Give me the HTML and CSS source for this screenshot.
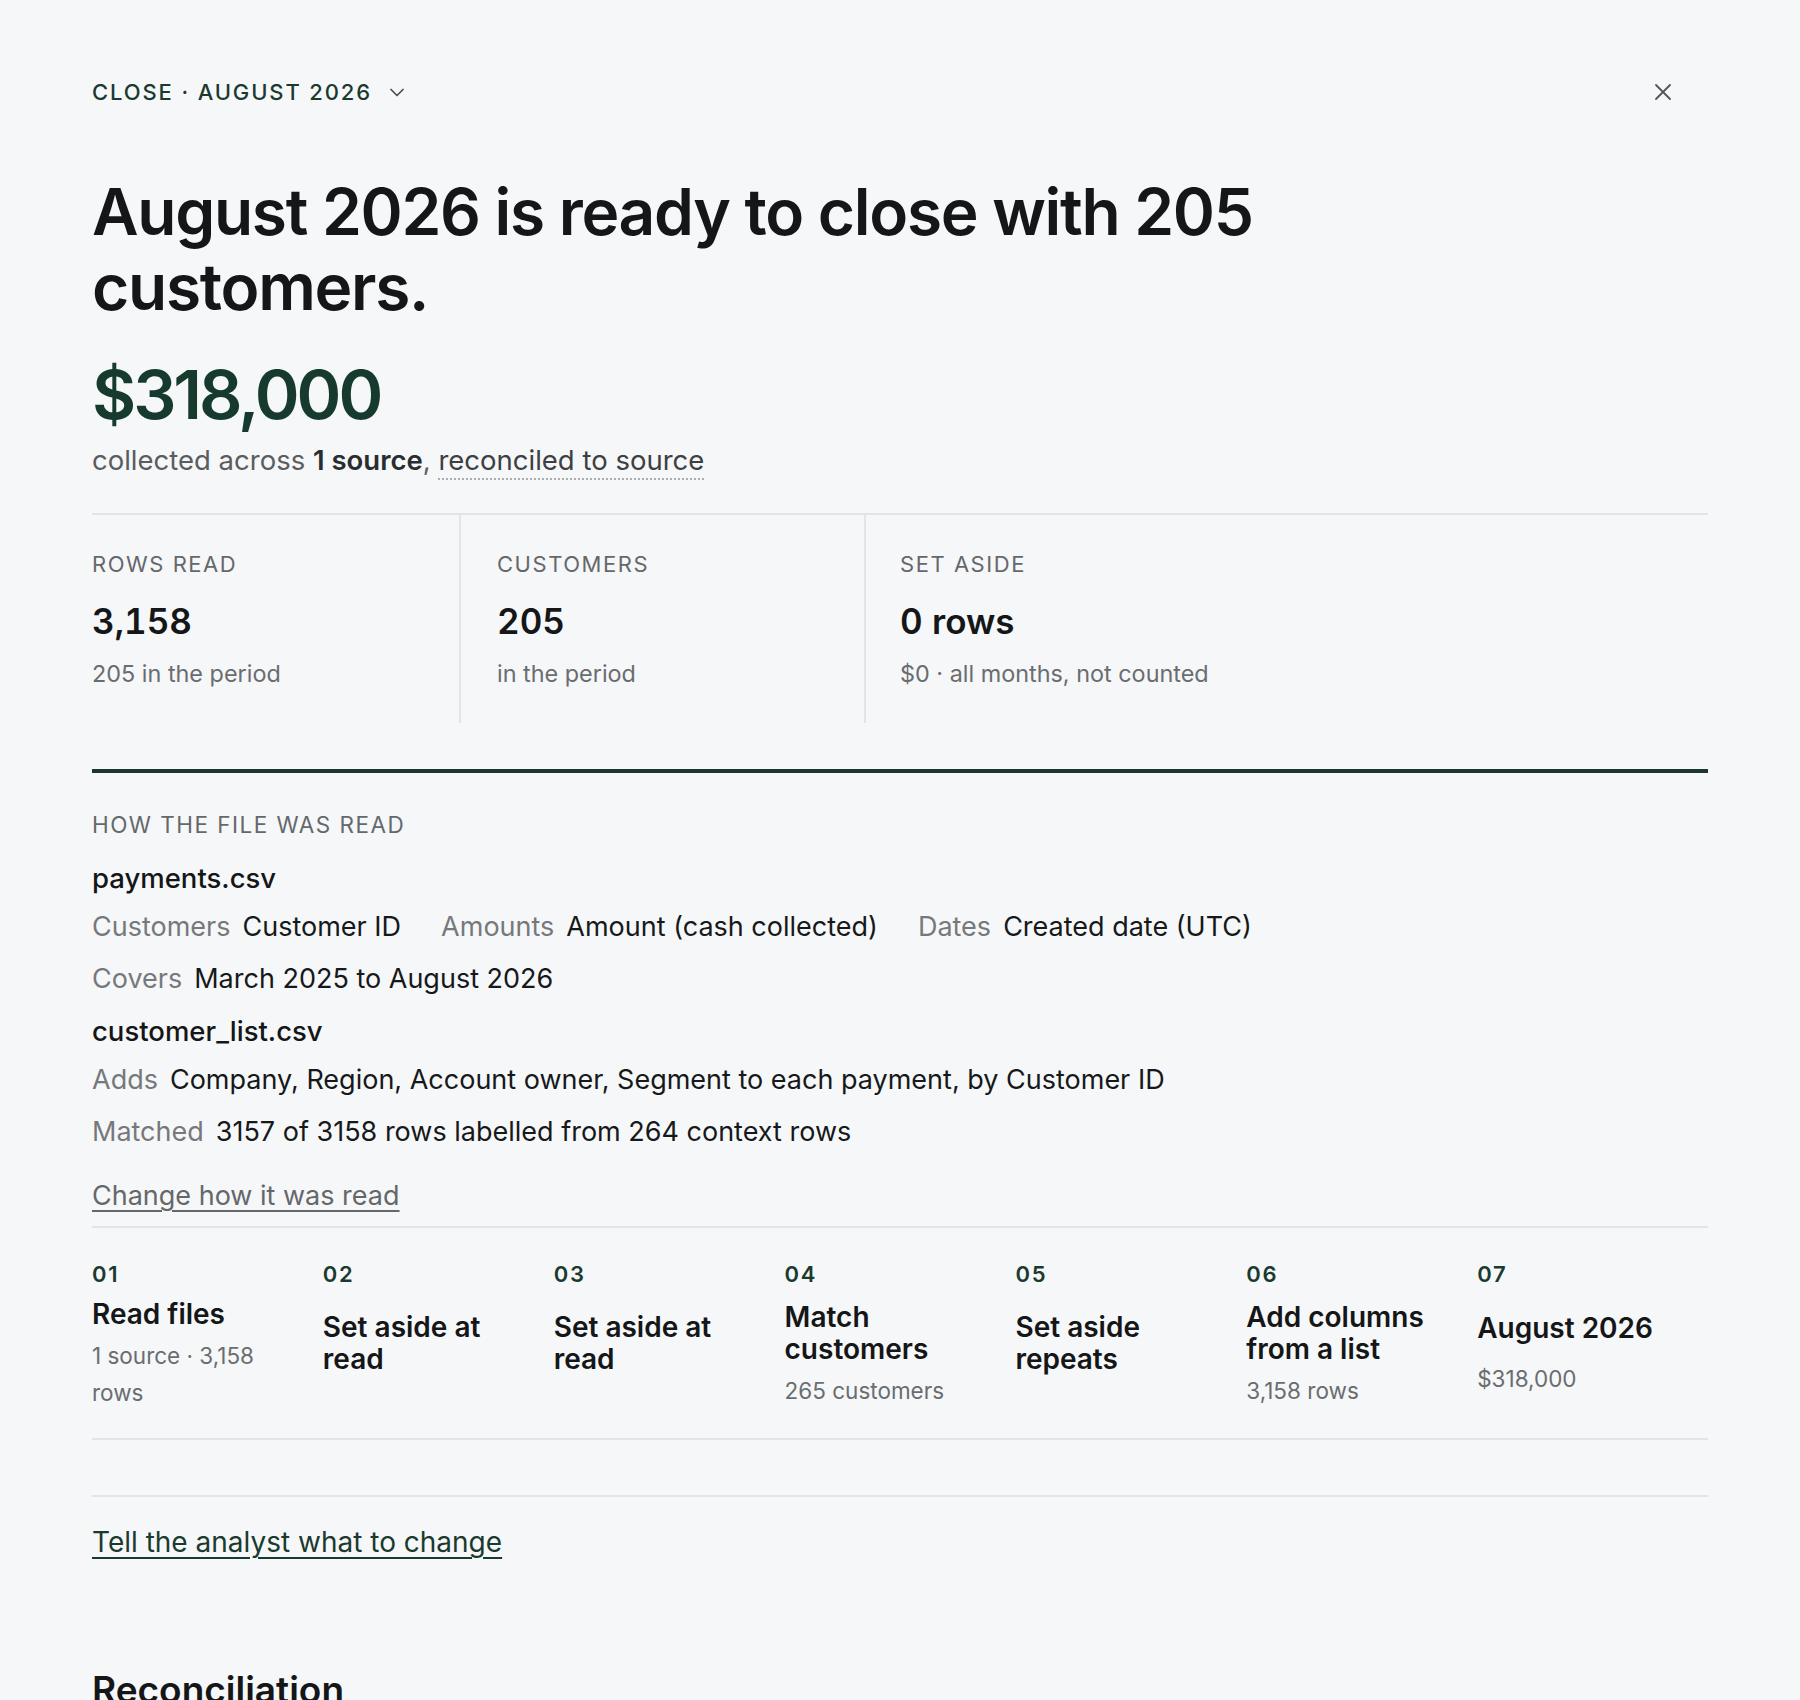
FILE: index.html
```html
<!DOCTYPE html>
<html lang="en">
<head>
  <meta charset="UTF-8" />
  <meta name="viewport" content="width=device-width, initial-scale=1.0"/>
  <title>Close · August 2026</title>
  <link rel="stylesheet" href="styles.css">
</head>
<body>

  <div class="page">

    <div class="header">
      <button class="period-btn">CLOSE · AUGUST 2026
        <svg class="chev" width="18" height="18" viewBox="0 0 18 18"><path d="M3 6.5l6 6 6-6" fill="none" stroke="#4a4d4f" stroke-width="1.7" stroke-linecap="round" stroke-linejoin="round"/></svg>
      </button>
      <button class="close-btn" aria-label="Close">
        <svg width="18" height="18" viewBox="0 0 18 18"><path d="M2 2l14 14M16 2L2 16" fill="none" stroke="#555" stroke-width="1.8" stroke-linecap="round"/></svg>
      </button>
    </div>

    <h1 class="headline">August 2026 is ready to close with 205 customers.</h1>

    <div class="amount">$318,000</div>
    <p class="amount-note">collected across <b>1 source</b>, <span class="dotted">reconciled to source</span></p>

    <div class="stats">
      <div class="stat">
        <div class="stat-label">ROWS READ</div>
        <div class="stat-value">3,158</div>
        <div class="stat-sub">205 in the period</div>
      </div>
      <div class="stat">
        <div class="stat-label">CUSTOMERS</div>
        <div class="stat-value">205</div>
        <div class="stat-sub">in the period</div>
      </div>
      <div class="stat">
        <div class="stat-label">SET ASIDE</div>
        <div class="stat-value">0 rows</div>
        <div class="stat-sub">$0 · all months, not counted</div>
      </div>
    </div>

    <div class="read-section">
      <div class="section-label">HOW THE FILE WAS READ</div>

      <div class="file-name">payments.csv</div>
      <div class="facts">
        <span class="fact"><span class="k">Customers</span><span class="v">Customer ID</span></span>
        <span class="fact"><span class="k">Amounts</span><span class="v">Amount (cash collected)</span></span>
        <span class="fact"><span class="k">Dates</span><span class="v">Created date (UTC)</span></span>
      </div>
      <div class="facts">
        <span class="fact"><span class="k">Covers</span><span class="v">March 2025 to August 2026</span></span>
      </div>

      <div class="file-name">customer_list.csv</div>
      <div class="facts">
        <span class="fact"><span class="k">Adds</span><span class="v">Company, Region, Account owner, Segment to each payment, by Customer ID</span></span>
      </div>
      <div class="facts">
        <span class="fact"><span class="k">Matched</span><span class="v">3157 of 3158 rows labelled from 264 context rows</span></span>
      </div>

      <a class="change-link" href="#">Change how it was read</a>
    </div>

    <div class="steps">
      <div class="step">
        <div class="step-num">01</div>
        <div class="step-body">
          <div class="step-title">Read files</div>
          <div class="step-sub">1 source · 3,158 rows</div>
        </div>
      </div>
      <div class="step">
        <div class="step-num">02</div>
        <div class="step-body">
          <div class="step-title">Set aside at read</div>
        </div>
      </div>
      <div class="step">
        <div class="step-num">03</div>
        <div class="step-body">
          <div class="step-title">Set aside at read</div>
        </div>
      </div>
      <div class="step">
        <div class="step-num">04</div>
        <div class="step-body">
          <div class="step-title">Match customers</div>
          <div class="step-sub">265 customers</div>
        </div>
      </div>
      <div class="step">
        <div class="step-num">05</div>
        <div class="step-body">
          <div class="step-title">Set aside repeats</div>
        </div>
      </div>
      <div class="step">
        <div class="step-num">06</div>
        <div class="step-body">
          <div class="step-title">Add columns from a list</div>
          <div class="step-sub">3,158 rows</div>
        </div>
      </div>
      <div class="step step-final">
        <div class="step-num">07</div>
        <div class="step-body">
          <div class="step-title">August 2026</div>
          <div class="step-sub">$318,000</div>
        </div>
      </div>
    </div>

    <div class="analyst">
      <a class="analyst-link" href="#">Tell the analyst what to change</a>
    </div>

    <h2 class="section-title">Reconciliation</h2>

  </div>

</body>
</html>
```

FILE: styles.css
```css
body {
  margin: 0;
  font-family: Inter, "Noto Sans", sans-serif;
  background: #f6f7f9;
  color: #16191a;
}
.page {
  padding: 78px 92px 0;
}
.header {
  display: flex;
  justify-content: space-between;
  align-items: center;
  padding-right: 36px;
  height: 28px;
}
.period-btn {
  display: flex;
  align-items: center;
  gap: 16px;
  background: none;
  border: none;
  padding: 0;
  font-family: inherit;
  font-size: 22px;
  font-weight: 500;
  letter-spacing: 0.085em;
  color: #1b3a2f;
  cursor: pointer;
}
.close-btn {
  background: none;
  border: none;
  padding: 0;
  display: flex;
  cursor: pointer;
}
.headline {
  margin: 68px 0 0;
  max-width: 1400px;
  font-size: 64px;
  line-height: 75px;
  font-weight: 600;
  letter-spacing: -0.02em;
  color: #141617;
}
.amount {
  margin-top: 28px;
  font-size: 68px;
  line-height: 84px;
  font-weight: 600;
  letter-spacing: -0.045em;
  color: #173a2e;
}
.amount-note {
  margin: 6px 0 0;
  font-size: 27.5px;
  line-height: 36px;
  color: #5a5d60;
}
.amount-note b {
  font-weight: 600;
  color: #2a2d2f;
}
.dotted {
  color: #3d4042;
  border-bottom: 2px dotted #a9acaf;
  padding-bottom: 1px;
}
.stats {
  display: flex;
  margin-top: 35px;
  border-top: 2px solid #e3e4e7;
}
.stat {
  width: 331px;
  padding: 35px 36px 33px;
  border-right: 2px solid #e3e4e7;
}
.stat:first-child {
  padding-left: 0;
}
.stat:last-child {
  border-right: none;
  width: auto;
  padding-left: 34px;
}
.stat-label {
  font-size: 22px;
  line-height: 28px;
  letter-spacing: 0.07em;
  color: #65686b;
}
.stat-value {
  margin-top: 21px;
  font-size: 35px;
  line-height: 44px;
  font-weight: 600;
  font-variant-numeric: tabular-nums;
  color: #141617;
}
.stat-sub {
  margin-top: 15px;
  font-size: 23.4px;
  line-height: 32px;
  color: #6a6d70;
}
.read-section {
  margin-top: 46px;
  border-top: 4px solid #1f3530;
  padding-top: 38px;
  padding-bottom: 12px;
  border-bottom: 2px solid #e3e4e7;
}
.section-label {
  font-size: 22.5px;
  line-height: 28px;
  letter-spacing: 0.065em;
  color: #65686b;
}
.file-name {
  margin-top: 22px;
  font-size: 27.5px;
  line-height: 34px;
  font-weight: 500;
  color: #141617;
}
.facts + .file-name {
  margin-top: 17px;
}
.facts {
  display: flex;
  gap: 40px;
  margin-top: 16px;
  font-size: 27px;
  line-height: 36px;
}
.file-name + .facts {
  margin-top: 14px;
}
.fact .k {
  color: #76797c;
  margin-right: 12px;
}
.fact .v {
  color: #16191a;
}
.change-link {
  display: inline-block;
  margin-top: 28px;
  font-size: 27px;
  line-height: 36px;
  color: #65686b;
  text-decoration: underline;
  text-underline-offset: 5px;
  text-decoration-thickness: 2px;
}
.steps {
  display: grid;
  grid-template-columns: repeat(7, 1fr);
  padding: 33px 0 27px;
  border-bottom: 2px solid #e3e4e7;
}
.step {
  display: flex;
  flex-direction: column;
  padding-right: 28px;
}
.step-num {
  font-size: 22px;
  line-height: 26px;
  font-weight: 600;
  letter-spacing: 0.08em;
  color: #1b3a2f;
}
.step-body {
  flex: 1;
  display: flex;
  flex-direction: column;
  justify-content: center;
  margin-top: 11px;
  min-height: 113px;
}
.step-title {
  font-size: 28px;
  line-height: 32px;
  font-weight: 600;
  color: #141617;
}
.step-title:only-child {
  margin-bottom: 23px;
}
.step-sub {
  margin-top: 7px;
  font-size: 22.5px;
  line-height: 37px;
  color: #6a6d70;
}
.step-final .step-sub {
  margin-top: 16px;
}
.analyst {
  margin-top: 55px;
  border-top: 2px solid #e3e4e7;
  padding-top: 27px;
}
.analyst-link {
  font-size: 28px;
  line-height: 36px;
  color: #1b3a2f;
  text-decoration: underline;
  text-underline-offset: 5px;
  text-decoration-thickness: 2px;
}
.section-title {
  margin: 108px 0 0;
  font-size: 37px;
  line-height: 44px;
  font-weight: 600;
  color: #141617;
}
```
